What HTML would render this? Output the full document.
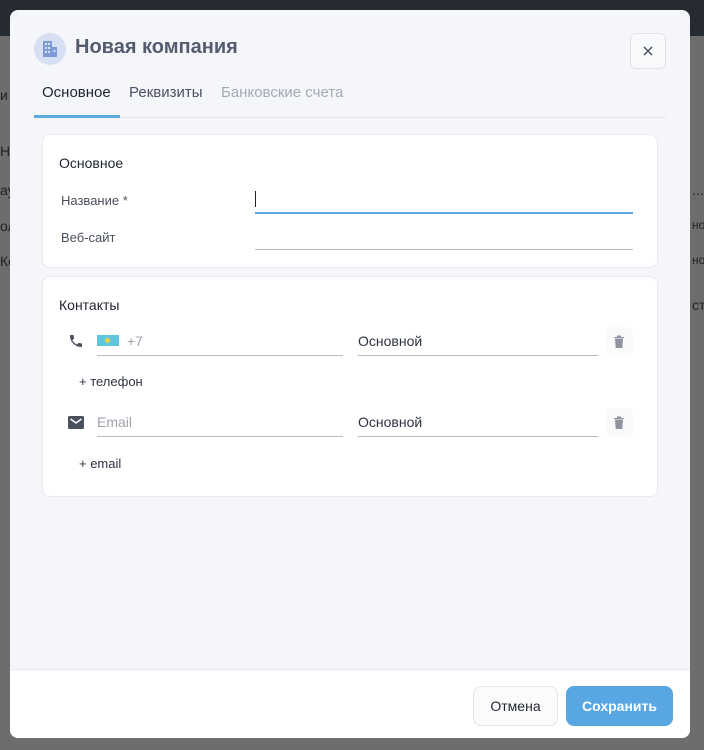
<!DOCTYPE html>
<html><head><meta charset="utf-8"><style>
*{box-sizing:border-box;margin:0;padding:0}
body{width:704px;height:750px;overflow:hidden;background:#6d6d6e;font-family:"Liberation Sans","Noto Sans CJK SC",sans-serif;position:relative;color:#2d3340}
.top{position:absolute;left:0;top:0;width:704px;height:36px;background:#262a33}
.bgt{position:absolute;color:#222;font-size:14px}
.modal{position:absolute;left:10px;top:10px;width:680px;height:728px;background:#f5f6fa;border-radius:8px;overflow:hidden}
.a{position:absolute}
.card{position:absolute;left:32px;width:616px;background:#fff;border:1px solid #e8eaef;border-radius:8px}
.lbl{font-size:13px;color:#4a505c}
.line{position:absolute;height:1px;background:#b8bbc2}
.foot{position:absolute;left:0;top:659px;width:680px;height:69px;background:#fff;border-top:1px solid #e8eaef}
</style></head><body>
<div class="top"></div>
<div class="bgt" style="left:0;top:87px">и</div>
<div class="bgt" style="left:0;top:143px">На</div>
<div class="bgt" style="left:0;top:182px">ау</div>
<div class="bgt" style="left:0;top:218px">ол</div>
<div class="bgt" style="left:0;top:253px">Ко</div>
<div class="bgt" style="left:692px;top:182px">...</div>
<div class="bgt" style="left:692px;top:218px;font-size:12px">но</div>
<div class="bgt" style="left:692px;top:253px;font-size:12px">но</div>
<div class="bgt" style="left:692px;top:297px">ст</div>
<div class="modal">
  <div class="a" style="left:24px;top:23px;width:32px;height:32px;border-radius:50%;background:#d6e0f2"></div>
  <svg class="a" style="left:30px;top:29px" width="20" height="20" viewBox="0 0 20 20"><g fill="#7d9bd6"><rect x="3" y="2" width="9" height="16"/><rect x="12" y="8" width="5" height="10"/></g><g fill="#d6e0f2"><rect x="5" y="4" width="2" height="2"/><rect x="8" y="4" width="2" height="2"/><rect x="5" y="8" width="2" height="2"/><rect x="8" y="8" width="2" height="2"/><rect x="5" y="12" width="2" height="2"/><rect x="8" y="12" width="2" height="2"/><rect x="13.5" y="11" width="2" height="2"/></g></svg>
  <div class="a" style="left:65px;top:26px;font-size:20px;font-weight:bold;color:#545c70">Новая компания</div>
  <div class="a" style="left:620px;top:23px;width:36px;height:36px;border:1px solid #e2e4ea;border-radius:6px;background:#f8f9fb"></div>
  <svg class="a" style="left:632px;top:35px" width="12" height="12" viewBox="0 0 12 12"><path d="M2 2L10 10M10 2L2 10" stroke="#4a4f5c" stroke-width="1.4"/></svg>
  <div class="a" style="left:32px;top:74px;font-size:15px;color:#1f2430">Основное</div>
  <div class="a" style="left:119px;top:74px;font-size:15px;color:#4a5266">Реквизиты</div>
  <div class="a" style="left:211px;top:74px;font-size:15px;color:#a5a9b3">Банковские счета</div>
  <div class="a" style="left:24px;top:107px;width:632px;height:1px;background:#e2e4ea"></div>
  <div class="a" style="left:24px;top:105px;width:86px;height:3px;background:#5aa8df"></div>

  <div class="card" style="top:124px;height:134px">
    <div class="a" style="left:16px;top:20px;font-size:14px;color:#1f2430">Основное</div>
    <div class="a lbl" style="left:18px;top:58px">Название *</div>
    <div class="a lbl" style="left:18px;top:95px">Веб-сайт</div>
    <div class="a" style="left:212px;top:56px;width:1px;height:16px;background:#222"></div>
    <div class="a" style="left:212px;top:77px;width:378px;height:2px;background:#5aa8df"></div>
    <div class="line" style="left:212px;top:114px;width:378px"></div>
  </div>

  <div class="card" style="top:266px;height:221px">
    <div class="a" style="left:16px;top:20px;font-size:14px;color:#1f2430">Контакты</div>
    <svg class="a" style="left:25px;top:56px" width="16" height="16" viewBox="0 0 24 24"><path fill="#4a4f5c" d="M6.6 10.8c1.4 2.8 3.8 5.1 6.6 6.6l2.2-2.2c.3-.3.7-.4 1-.2 1.1.4 2.3.6 3.6.6.6 0 1 .4 1 1V20c0 .6-.4 1-1 1C10.6 21 3 13.4 3 4c0-.6.4-1 1-1h3.5c.6 0 1 .4 1 1 0 1.3.2 2.5.6 3.6.1.3 0 .7-.2 1z"/></svg>
    <div class="a" style="left:54px;top:58px;width:22px;height:11px;background:#5fc6dc"><div style="position:absolute;left:8px;top:3px;width:5px;height:5px;border-radius:50%;background:#e8d24a"></div></div>
    <div class="a" style="left:84px;top:56px;font-size:14px;color:#9ea3ad">+7</div>
    <div class="line" style="left:54px;top:78px;width:246px"></div>
    <div class="a" style="left:315px;top:56px;font-size:14px;color:#2d3340">Основной</div>
    <div class="line" style="left:315px;top:78px;width:240px"></div>
    <div class="a" style="left:562px;top:50px;width:28px;height:28px;border-radius:6px;background:#fafafb"></div>
    <svg class="a" style="left:570px;top:57px" width="12" height="14" viewBox="0 0 12 14"><path fill="#8f94a0" d="M1 3h10v1H1zM4 1.5h4V3H4zM2 4.5h8L9.3 14H2.7z"/></svg>
    <div class="a" style="left:36px;top:97px;font-size:13px;color:#2d3340">+ телефон</div>
    <svg class="a" style="left:25px;top:139px" width="16" height="13" viewBox="0 0 16 13"><rect width="16" height="13" rx="1.5" fill="#4a4f5c"/><path d="M2.5 3L8 7L13.5 3" stroke="#fff" stroke-width="1.5" fill="none"/></svg>
    <div class="a" style="left:54px;top:137px;font-size:14px;color:#9ea3ad">Email</div>
    <div class="line" style="left:54px;top:159px;width:246px"></div>
    <div class="a" style="left:315px;top:137px;font-size:14px;color:#2d3340">Основной</div>
    <div class="line" style="left:315px;top:159px;width:240px"></div>
    <div class="a" style="left:562px;top:131px;width:28px;height:28px;border-radius:6px;background:#fafafb"></div>
    <svg class="a" style="left:570px;top:138px" width="12" height="14" viewBox="0 0 12 14"><path fill="#8f94a0" d="M1 3h10v1H1zM4 1.5h4V3H4zM2 4.5h8L9.3 14H2.7z"/></svg>
    <div class="a" style="left:36px;top:179px;font-size:13px;color:#2d3340">+ email</div>
  </div>

  <div class="foot">
    <div class="a" style="left:463px;top:16px;width:85px;height:40px;border:1px solid #e2e4ea;border-radius:8px;background:#fbfbfc;font-size:14px;color:#1f2430;text-align:center;line-height:38px">Отмена</div>
    <div class="a" style="left:556px;top:16px;width:107px;height:40px;border-radius:8px;background:#58a7e2;font-size:14px;font-weight:bold;color:#fff;text-align:center;line-height:40px">Сохранить</div>
  </div>
</div>
</body></html>
